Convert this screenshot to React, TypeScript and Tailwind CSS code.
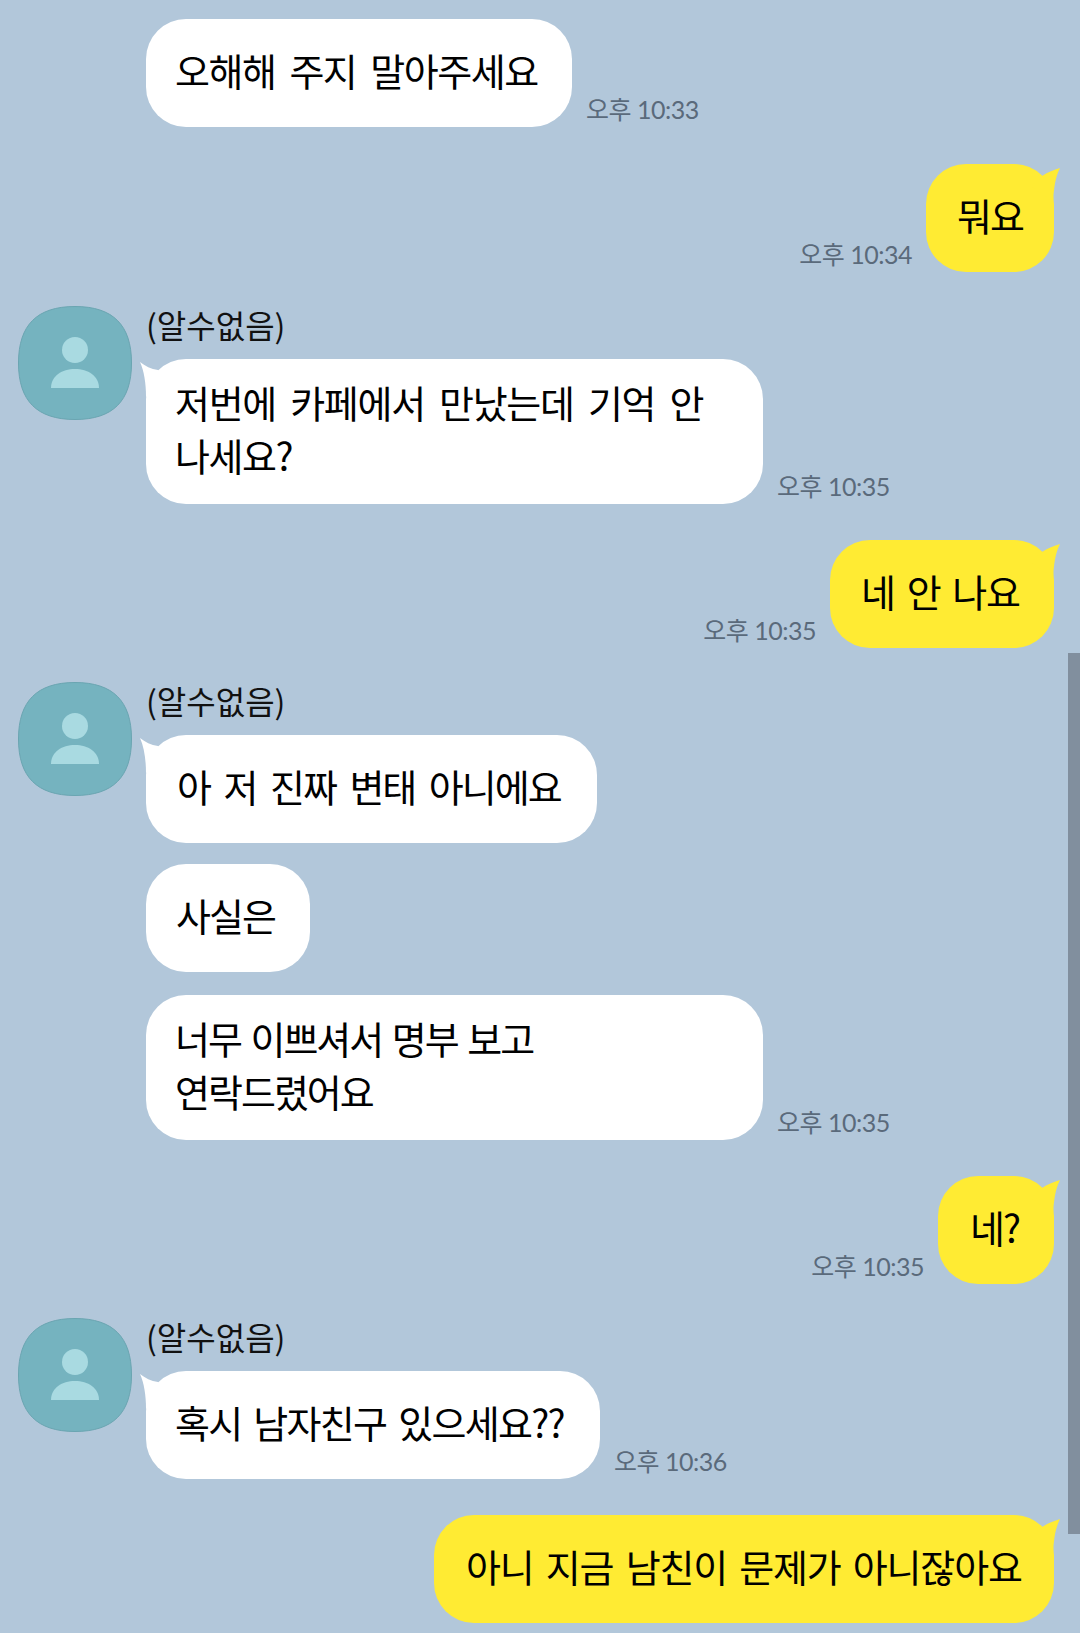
import React from "react";

const KR = "font-['Noto_Sans_CJK_KR',sans-serif]";

function TailLeft() {
  return (
    <svg className="absolute left-[-7px] top-[2px]" width="40" height="40" viewBox="0 0 40 40">
      <path d="M1 1 C6 5 12 8 19 9 L30 20 L7 36 C7 22 5 10 1 1 Z" fill="#ffffff" />
    </svg>
  );
}
function TailRight() {
  return (
    <svg className="absolute right-[-7px] top-[2px]" width="40" height="40" viewBox="0 0 40 40">
      <path d="M39 2 C33 4 27 6 21 10 L10 20 L32 36 C33 22 34 12 39 2 Z" fill="#ffeb33" />
    </svg>
  );
}

function Bubble({ me, className, children }: { me?: boolean; className: string; children: React.ReactNode }) {
  return (
    <div className={`relative rounded-[40px] text-[38px] leading-[53px] tracking-[-2px] text-black flex flex-col justify-center whitespace-nowrap pb-[8px] ${me ? "bg-[#ffeb33]" : "bg-white"} ${KR} ${className}`}>
      {children}
    </div>
  );
}

function Time({ children }: { children: React.ReactNode }) {
  return (
    <span className="font-['Lato','Noto_Sans_CJK_KR',sans-serif] text-[25px] leading-[30px] tracking-[-0.5px] text-[#5a6a7b] whitespace-nowrap mb-[3px]">
      {children}
    </span>
  );
}

function Avatar() {
  return (
    <svg className="shrink-0" width="114" height="114" viewBox="0 0 114 114">
      <path d="M57 .5 C95 .5 113.500 19 113.500 57 C113.500 95 95 113.500 57 113.500 C19 113.500 .5 95 .5 57 C.5 19 19 .5 57 .5 Z" fill="#75b3bf" stroke="#6aa5b1" />
      <circle cx="57" cy="44" r="13" fill="#a9dae1" />
      <path d="M33 82 C33 70 44 63 57 63 C70 63 81 70 81 82 Z" fill="#a9dae1" />
    </svg>
  );
}

function Name() {
  return <div className={`h-[53px] text-[32px] leading-[36px] text-[#111] ${KR}`}>(알수없음)</div>;
}

function Mine({ mt, w, text, time, extra, textCls }: { mt: string; w: string; text: string; time: string; extra: string; textCls?: string }) {
  return (
    <div className={`flex justify-end items-end gap-[14px] pr-[26px] ${mt}`}>
      <Time>{time}</Time>
      <Bubble me className={`h-[108px] ${w} ${extra}`}>
        <TailRight />
        <span className={`relative ${textCls ?? ""}`}>{text}</span>
      </Bubble>
    </div>
  );
}

export default function App() {
  return (
    <div className="relative w-[1080px] h-[1633px] overflow-hidden bg-[#b2c7da]">
      <div className="flex flex-col">
        <div className="flex items-end gap-[14px] pl-[146px] mt-[19px]">
          <Bubble className="h-[108px] w-[426px] pl-[29px]">
            <span className="tracking-[-1.5px] [word-spacing:7px]">오해해 주지 말아주세요</span>
          </Bubble>
          <Time>오후 10:33</Time>
        </div>

        <Mine mt="mt-[37px]" w="w-[128px]" extra="pl-[31px]" text="뭐요" time="오후 10:34" />

        <div className="flex gap-[14px] pl-[18px] mt-[34px]">
          <Avatar />
          <div className="flex flex-col">
            <Name />
            <div className="flex items-end gap-[14px]">
              <Bubble className="h-[145px] w-[617px] pl-[29px]">
                <TailLeft />
                <span className="relative tracking-[-1.3px] [word-spacing:7px]">저번에 카페에서 만났는데 기억 안</span>
                <span className="relative tracking-[-1.5px]">나세요?</span>
              </Bubble>
              <Time>오후 10:35</Time>
            </div>
          </div>
        </div>

        <Mine mt="mt-[36px]" w="w-[224px]" extra="pl-[31px]" textCls="tracking-[-1.4px] [word-spacing:5px]" text="네 안 나요" time="오후 10:35" />

        <div className="flex gap-[14px] pl-[18px] mt-[34px]">
          <Avatar />
          <div className="flex flex-col">
            <Name />
            <Bubble className="h-[108px] w-[451px] pl-[31px]">
              <TailLeft />
              <span className="relative [word-spacing:7px]">아 저 진짜 변태 아니에요</span>
            </Bubble>
            <Bubble className="h-[108px] w-[164px] mt-[21px] pl-[30px]">사실은</Bubble>
            <div className="flex items-end gap-[14px] mt-[23px]">
              <Bubble className="h-[145px] w-[617px] pl-[29px]">
                <span className="[word-spacing:3px]">너무 이쁘셔서 명부 보고</span>
                <span>연락드렸어요</span>
              </Bubble>
              <Time>오후 10:35</Time>
            </div>
          </div>
        </div>

        <Mine mt="mt-[36px]" w="w-[116px]" extra="pl-[32px]" text="네?" time="오후 10:35" />

        <div className="flex gap-[14px] pl-[18px] mt-[34px]">
          <Avatar />
          <div className="flex flex-col">
            <Name />
            <div className="flex items-end gap-[14px]">
              <Bubble className="h-[108px] w-[454px] pl-[29px]">
                <TailLeft />
                <span className="relative tracking-[-1.7px] [word-spacing:5px]">혹시 남자친구 있으세요??</span>
              </Bubble>
              <Time>오후 10:36</Time>
            </div>
          </div>
        </div>

        <div className="flex justify-end pr-[26px] mt-[36px]">
          <Bubble me className="h-[108px] w-[620px] pl-[32px]">
            <TailRight />
            <span className="relative tracking-[-1.2px] [word-spacing:5px]">아니 지금 남친이 문제가 아니잖아요</span>
          </Bubble>
        </div>
      </div>

      <div className="absolute right-0 top-[653px] w-[12px] h-[881px] bg-[#818f9e]" />
    </div>
  );
}
